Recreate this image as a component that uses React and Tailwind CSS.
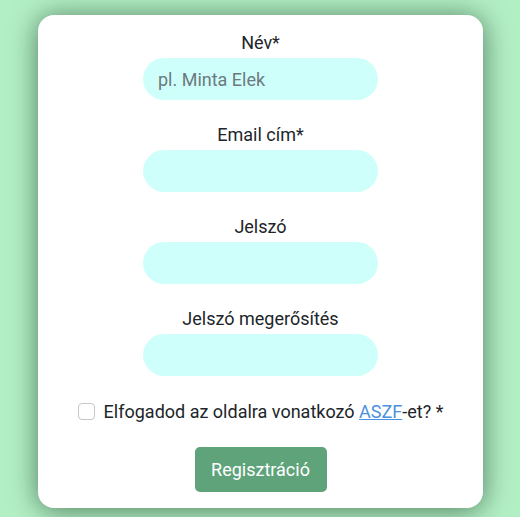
import React from "react";

const Field = ({ label, type = "text", placeholder }) => {
  return (
    <div className="flex flex-col items-center mb-[22px]">
      <label className="text-[18px] leading-[25px] text-[#212529] mb-[3px]">
        {label}
      </label>
      <input
        type={type}
        placeholder={placeholder}
        className="w-[235px] h-[42px] rounded-full bg-[#cffffb] px-[15px] text-[18px] text-[#212529] placeholder:text-[#6c7a80] outline-none"
      />
    </div>
  );
};

const App = () => {
  return (
    <div
      className="w-full min-h-[517px] bg-[#b3efc5] pt-[15px] pl-[38px]"
      style={{ fontFamily: "Roboto, 'Liberation Sans', sans-serif" }}
    >
      <div className="w-[445px] h-[493px] bg-white rounded-[16px] shadow-[0_2px_28px_rgba(10,45,20,0.6)] pt-[15px] flex flex-col items-center">
        <Field label="Név*" placeholder="pl. Minta Elek" />
        <Field label="Email cím*" type="email" />
        <Field label="Jelszó" type="password" />
        <Field label="Jelszó megerősítés" type="password" />
        <div className="flex items-center gap-[9px] mt-[1px] text-[18px] leading-[25px] text-[#212529]">
          <input
            type="checkbox"
            className="appearance-none w-[17px] h-[17px] rounded-[4px] border border-[#c2c7cc] bg-white"
          />
          <span>
            Elfogadod az oldalra vonatkozó{" "}
            <a href="#" className="text-[#4a90e2] underline">
              ASZF
            </a>
            -et? *
          </span>
        </div>
        <button className="mt-[23px] w-[132px] h-[45px] rounded-[5px] bg-[#5fa37b] text-white text-[18px]">
          Regisztráció
        </button>
      </div>
    </div>
  );
};

export default App;
